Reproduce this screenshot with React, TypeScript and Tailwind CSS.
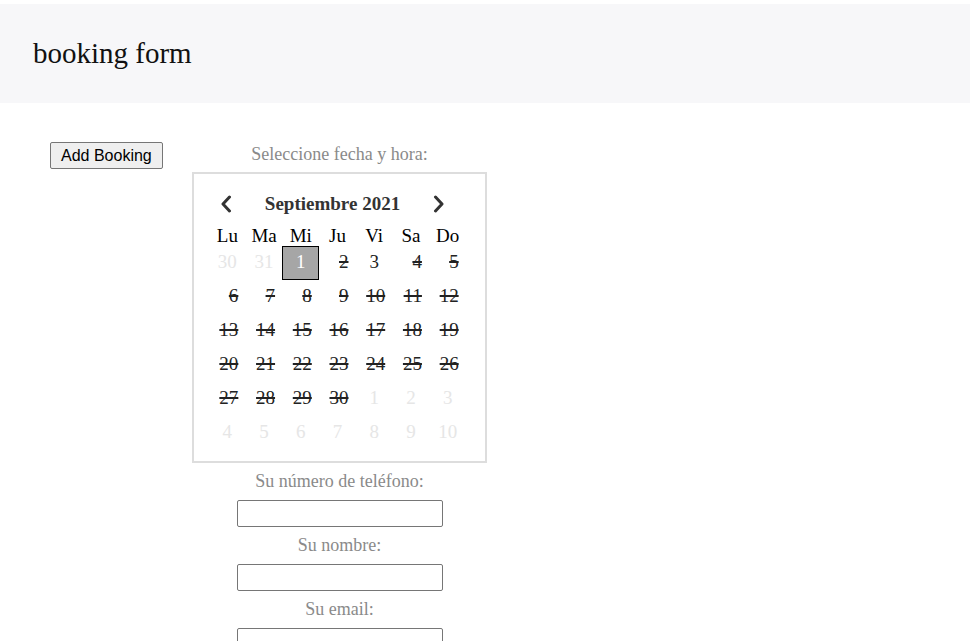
import React from 'react';

type Day = { n: number; kind: 'muted' | 'struck' | 'open' | 'selected' };

const rows: Day[][] = [
  [
    { n: 30, kind: 'muted' },
    { n: 31, kind: 'muted' },
    { n: 1, kind: 'selected' },
    { n: 2, kind: 'struck' },
    { n: 3, kind: 'open' },
    { n: 4, kind: 'struck' },
    { n: 5, kind: 'struck' },
  ],
  [6, 7, 8, 9, 10, 11, 12].map((n) => ({ n, kind: 'struck' as const })),
  [13, 14, 15, 16, 17, 18, 19].map((n) => ({ n, kind: 'struck' as const })),
  [20, 21, 22, 23, 24, 25, 26].map((n) => ({ n, kind: 'struck' as const })),
  [
    ...[27, 28, 29, 30].map((n) => ({ n, kind: 'struck' as const })),
    ...[1, 2, 3].map((n) => ({ n, kind: 'muted' as const })),
  ],
  [4, 5, 6, 7, 8, 9, 10].map((n) => ({ n, kind: 'muted' as const })),
];

const weekdays = ['Lu', 'Ma', 'Mi', 'Ju', 'Vi', 'Sa', 'Do'];

function Chevron({ dir }: { dir: 'left' | 'right' }) {
  return (
    <svg width="14" height="18" viewBox="0 0 14 18" fill="none">
      <path
        d={dir === 'left' ? 'M10.5 2 L4 9 L10.5 16' : 'M3.5 2 L10 9 L3.5 16'}
        stroke="#333"
        strokeWidth="3"
        strokeLinecap="round"
        strokeLinejoin="round"
      />
    </svg>
  );
}

function DayCell({ d }: { d: Day }) {
  if (d.kind === 'selected') {
    return (
      <div className="flex h-[34px] items-center justify-center">
        <div className="flex h-[34px] w-[37px] items-center justify-center border border-black bg-[#a6a6a6] text-white">
          {d.n}
        </div>
      </div>
    );
  }
  if (d.kind === 'struck') {
    return (
      <div className="flex h-[34px] items-center justify-center">
        <span className="w-[22px] text-right text-[#222] line-through decoration-[1.5px]">{d.n}</span>
      </div>
    );
  }
  return (
    <div
      className={`flex h-[34px] items-center justify-center ${d.kind === 'muted' ? 'text-[#e6e6e6]' : 'text-[#222]'}`}
    >
      {d.n}
    </div>
  );
}

function Field({ label }: { label: string }) {
  return (
    <div className="flex flex-col items-center">
      <div className="h-[20px] text-[18px] leading-[20px] text-[#8a8a8a]">{label}</div>
      <input className="mt-[9px] h-[27px] w-[206px] rounded-[2px] border border-[#767676] bg-white" />
    </div>
  );
}

export default function App() {
  return (
    <div className="min-h-[641px] bg-white font-['Liberation_Serif',serif]">
      <div className="mt-1 flex h-[99px] items-center bg-[#f7f7f9] pl-[33px]">
        <h1 className="text-[29px] font-normal text-[#111]">booking form</h1>
      </div>
      <div className="flex pt-[39px]">
        <div className="w-[192px] pl-[50px]">
          <button className="h-[27px] rounded-[2px] border border-[#767676] bg-[#efefef] px-[10px] font-['Liberation_Sans',sans-serif] text-[16px] text-black">
            Add Booking
          </button>
        </div>
        <div className="flex w-[295px] flex-col items-center">
          <div className="mt-[2px] text-[18px] leading-[20px] text-[#8a8a8a]">Seleccione fecha y hora:</div>
          <div className="mt-[8px] h-[291px] w-[295px] border-2 border-[#dddddd] pl-[15px] pr-[19px] pt-[16px]">
            <div className="flex items-center justify-between pl-[10px] pr-[20px]">
              <Chevron dir="left" />
              <div className="text-[19px] font-bold text-[#333]">Septiembre 2021</div>
              <Chevron dir="right" />
            </div>
            <div className="mt-[6px] grid grid-cols-7 text-[19px] leading-[22px] text-black">
              {weekdays.map((w) => (
                <div key={w} className="text-center">
                  {w}
                </div>
              ))}
            </div>
            <div className="-mt-[1px] grid grid-cols-7 text-[19px]">
              {rows.flat().map((d, i) => (
                <DayCell key={i} d={d} />
              ))}
            </div>
          </div>
          <div className="mt-[8px] flex flex-col gap-[8px]">
            <Field label="Su número de teléfono:" />
            <Field label="Su nombre:" />
            <Field label="Su email:" />
          </div>
        </div>
      </div>
    </div>
  );
}
